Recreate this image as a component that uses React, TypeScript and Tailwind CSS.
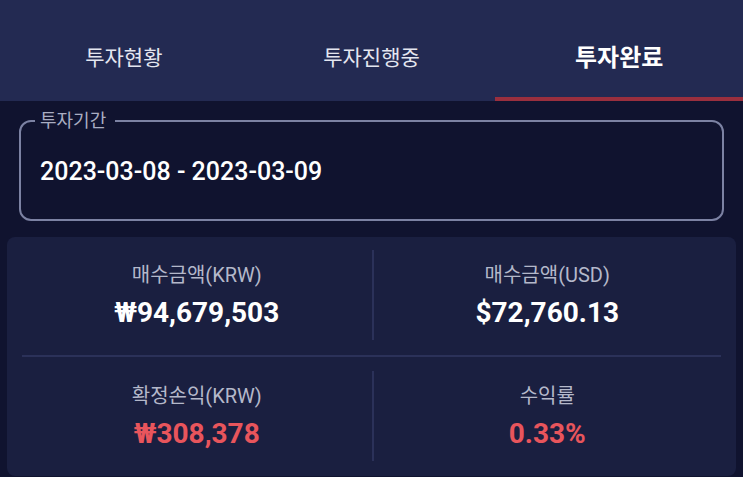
import React from "react";

const tabs = [
  { label: "투자현황", active: false },
  { label: "투자진행중", active: false },
  { label: "투자완료", active: true },
];

function Stat({ label, value, red }: { label: string; value: string; red?: boolean }) {
  return (
    <div className="flex flex-col items-center pt-[13px] h-[90px]">
      <div className="text-[20px] leading-[24px] text-[#b4b8ca]">{label}</div>
      <div
        className={
          "mt-[8px] text-[28px] leading-[36px] font-bold " +
          (red ? "text-[#e8555c]" : "text-white")
        }
      >
        {value}
      </div>
    </div>
  );
}

export default function App() {
  return (
    <div
      className="w-[743px] h-[477px] overflow-hidden bg-[#10132f]"
      style={{ fontFamily: "Roboto, 'Noto Sans CJK KR', sans-serif" }}
    >
      <div className="flex h-[101px] bg-[#232a52]">
        {tabs.map((t) => (
          <div key={t.label} className="flex-1 flex flex-col justify-between items-center">
            <div
              className={
                t.active
                  ? "pt-[42px] text-[24px] leading-[32px] font-bold text-white"
                  : "pt-[44px] text-[21px] leading-[28px] text-[#e4e6f0]"
              }
            >
              {t.label}
            </div>
            <div className={"w-full h-[4px] " + (t.active ? "bg-[#9a2f3e]" : "")} />
          </div>
        ))}
      </div>

      <fieldset className="mx-[19px] mt-[9px] h-[111px] border-2 border-[#7c82a3] rounded-[12px] px-[19px]">
        <legend className="ml-[-5px] pl-[5px] pr-[9px] text-[18px] leading-[22px] text-[#a9adc2]">투자기간</legend>
        <div className="pt-[25px] text-[25px] leading-[30px] font-medium text-white">
          2023-03-08 - 2023-03-09
        </div>
      </fieldset>

      <div className="mx-[7px] mt-[16px] rounded-[8px] bg-[#1a1f40] px-[15px]">
        <div className="pt-[13px] pb-[15px] grid grid-cols-2">
          <Stat label="매수금액(KRW)" value="₩94,679,503" />
          <div className="border-l-2 border-[#2b3159]">
            <Stat label="매수금액(USD)" value="$72,760.13" />
          </div>
        </div>
        <div className="h-[2px] bg-[#2b3159]" />
        <div className="pt-[14px] pb-[15px] grid grid-cols-2">
          <Stat label="확정손익(KRW)" value="₩308,378" red />
          <div className="border-l-2 border-[#2b3159]">
            <Stat label="수익률" value="0.33%" red />
          </div>
        </div>
      </div>
    </div>
  );
}
